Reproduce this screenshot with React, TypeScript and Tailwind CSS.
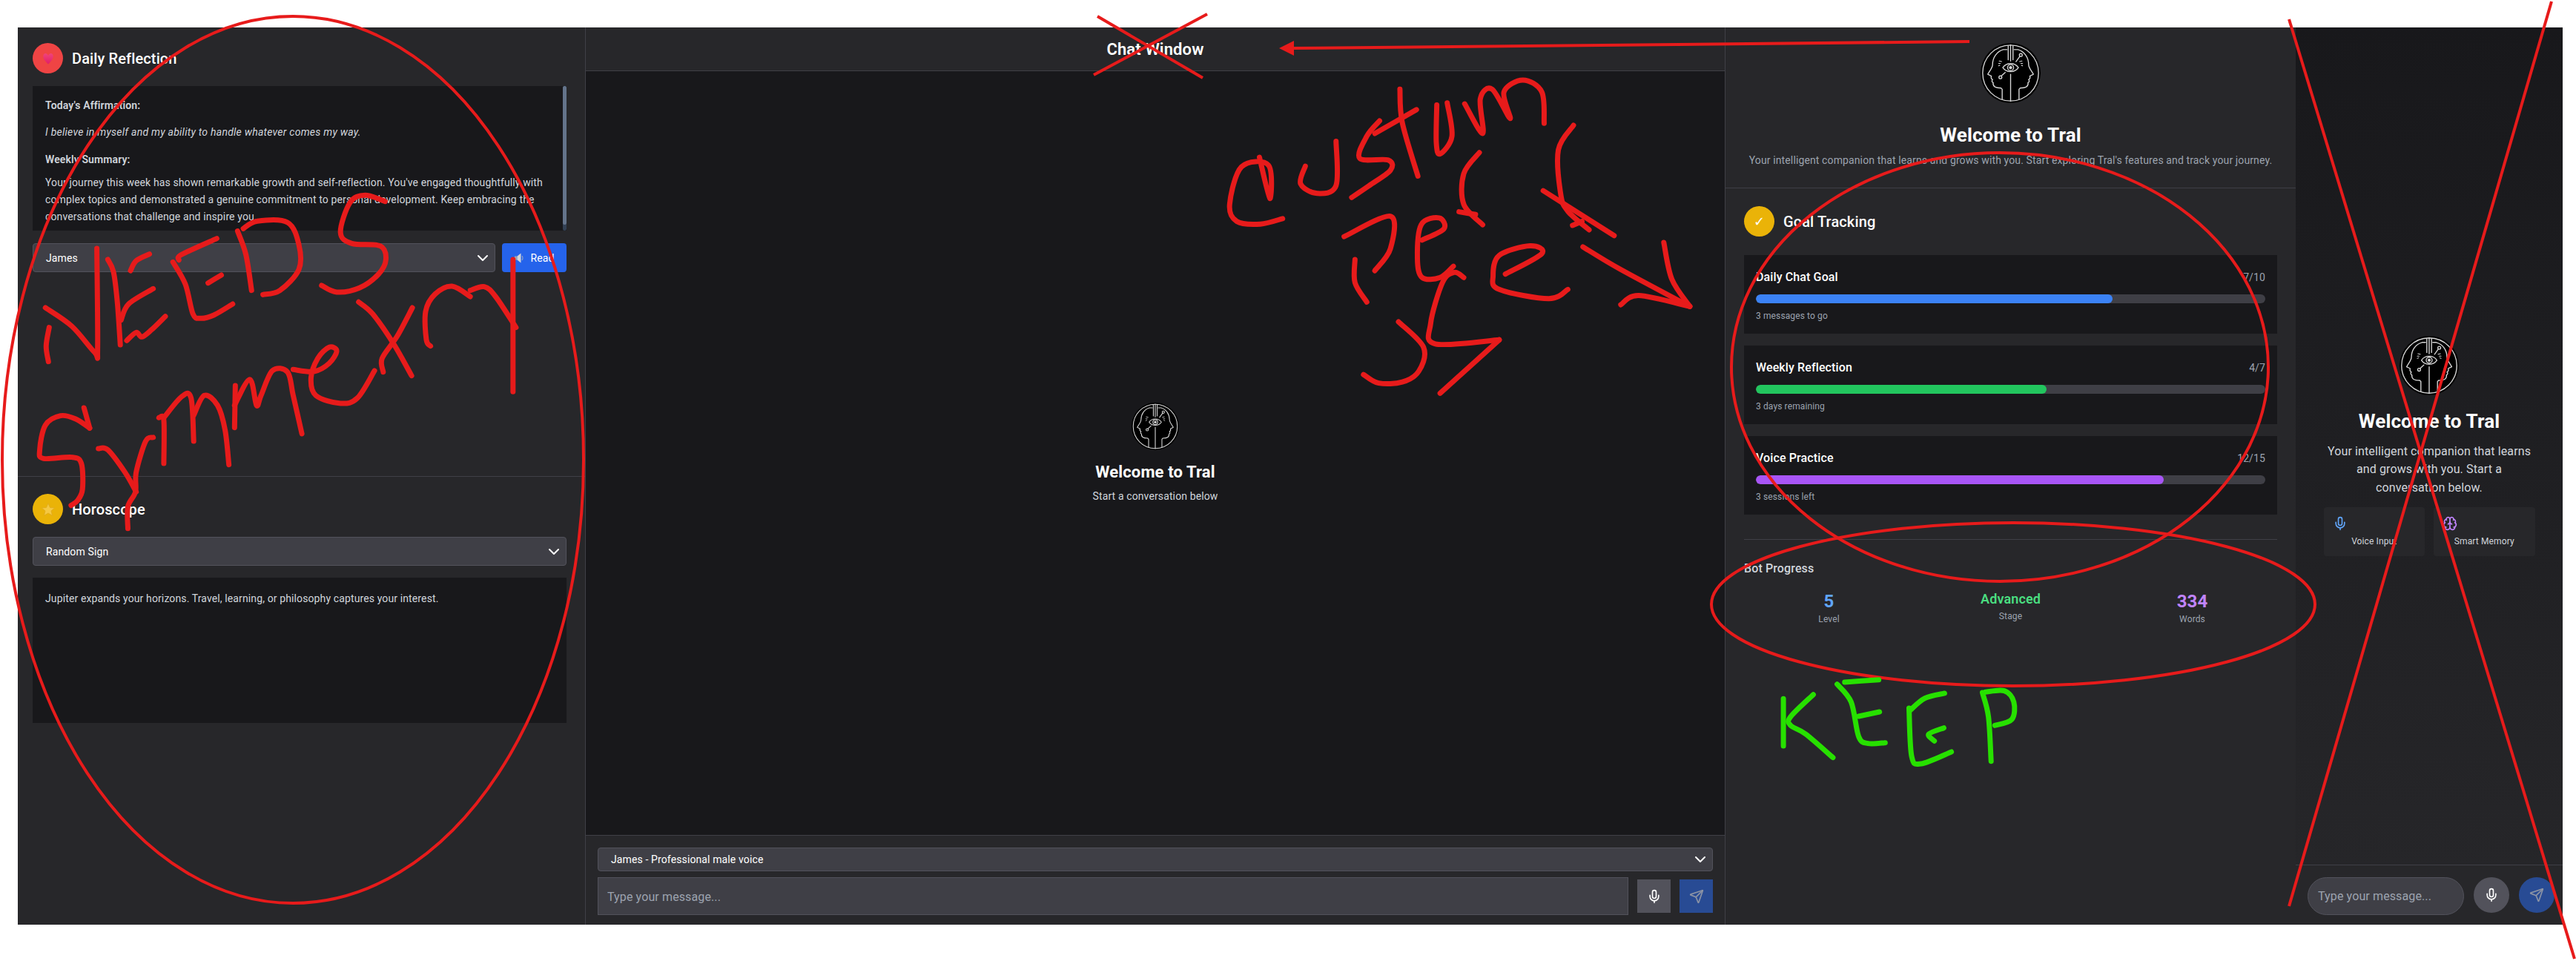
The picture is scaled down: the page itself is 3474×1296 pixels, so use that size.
import React from "react";
import { ChevronDown, Mic, Send, Brain } from "lucide-react";

type P = [number, number];

function smooth(pts: P[]): string {
  let d = `M${pts[0][0]} ${pts[0][1]}`;
  for (let i = 0; i < pts.length - 1; i++) {
    const p0 = pts[Math.max(0, i - 1)];
    const p1 = pts[i];
    const p2 = pts[i + 1];
    const p3 = pts[Math.min(pts.length - 1, i + 2)];
    const c1x = p1[0] + (p2[0] - p0[0]) / 6;
    const c1y = p1[1] + (p2[1] - p0[1]) / 6;
    const c2x = p2[0] - (p3[0] - p1[0]) / 6;
    const c2y = p2[1] - (p3[1] - p1[1]) / 6;
    d += ` C${c1x} ${c1y} ${c2x} ${c2y} ${p2[0]} ${p2[1]}`;
  }
  return d;
}

const symmetryInk: P[][] = [
  [[128, 503], [122, 440], [130, 365]],
  [[120, 285], [190, 360], [250, 465], [258, 450], [256, 45]],
  [[285, 90], [300, 140], [310, 260], [318, 435]],
  [[395, 68], [360, 95], [345, 135]],
  [[405, 208], [340, 270], [320, 335]],
  [[437, 320], [400, 375], [375, 403], [360, 385], [335, 418]],
  [[573, 5], [480, 70], [473, 92]],
  [[457, 100], [490, 190], [510, 310], [530, 328], [565, 315], [615, 270]],
  [[585, 153], [550, 185]],
  [[628, -25], [650, 70], [665, 215]],
  [[643, -35], [680, -65], [760, -60], [790, 30], [790, 130], [740, 215], [695, 232]],
  [[1018, -145], [965, -170], [925, -140], [900, -20], [930, 25], [1005, 35], [1020, 90], [1000, 150], [950, 205], [890, 222], [850, 195]],
  [[222, 690], [237, 772]],
  [[237, 772], [200, 735], [160, 722], [120, 760], [105, 860], [115, 895], [190, 890], [215, 915], [218, 1020], [205, 1065], [188, 1085]],
  [[260, 855], [285, 860], [330, 950], [360, 1030]],
  [[405, 810], [385, 825], [360, 950], [358, 1030], [338, 1090], [338, 1178]],
  [[420, 730], [433, 740], [433, 915]],
  [[433, 730], [480, 645], [505, 650], [512, 825]],
  [[512, 720], [540, 640], [575, 680], [595, 780], [605, 920]],
  [[622, 600], [620, 770]],
  [[620, 680], [660, 575], [678, 680], [690, 640], [720, 540], [760, 545], [775, 640], [798, 795]],
  [[775, 535], [830, 543], [870, 510], [890, 460], [870, 445], [840, 490], [822, 570], [835, 640], [900, 672], [945, 650], [990, 540]],
  [[948, 262], [985, 310], [1040, 430], [1088, 560]],
  [[1090, 285], [1050, 400], [1010, 490], [1013, 545]],
  [[1138, 440], [1127, 415], [1125, 300], [1150, 230], [1195, 198], [1243, 240]],
  [[1243, 215], [1280, 200], [1310, 240], [1364, 365]],
  [[1356, 90], [1356, 625]],
];

const customInk: P[][] = [
  [[468, 462], [490, 583], [487, 485], [430, 490], [405, 600], [420, 650], [470, 658], [517, 642]],
  [[565, 488], [555, 540], [590, 568], [630, 545], [630, 415]],
  [[722, 355], [695, 400], [680, 465], [740, 470], [745, 500], [700, 545], [663, 580]],
  [[765, 262], [770, 360], [803, 517]],
  [[712, 392], [800, 322]],
  [[843, 308], [842, 420], [850, 452], [875, 400], [865, 302]],
  [[902, 305], [940, 392], [935, 290], [960, 262], [998, 348], [985, 270], [1025, 235], [1065, 270], [1070, 362]],
  [[933, 448], [900, 510], [900, 600], [940, 660]],
  [[890, 622], [925, 630]],
  [[1132, 368], [1100, 440], [1105, 570], [1120, 620], [1165, 675]],
  [[1130, 662], [1150, 650]],
  [[1068, 560], [1218, 692]],
  [[1152, 725], [1230, 790], [1378, 900]],
  [[1323, 712], [1340, 820], [1378, 900]],
  [[1232, 895], [1270, 868], [1378, 900]],
  [[647, 695], [745, 635], [745, 730], [712, 795]],
  [[670, 762], [670, 830], [695, 887]],
  [[812, 705], [858, 672], [848, 640], [810, 660], [802, 760], [812, 815], [850, 815], [878, 782]],
  [[900, 815], [880, 800], [855, 830], [830, 950], [840, 1010], [975, 998]],
  [[975, 998], [850, 1155]],
  [[988, 805], [1065, 745], [1040, 722], [975, 750], [962, 810], [975, 850], [1080, 877], [1120, 850]],
  [[762, 945], [815, 1020], [805, 1090], [770, 1122], [720, 1125], [688, 1100]],
];

const keepInk: P[][] = [
  [[206, 727], [206, 918]],
  [[285, 710], [225, 800], [225, 835], [265, 870], [337, 965]],
  [[368, 660], [458, 650]],
  [[348, 668], [385, 740], [405, 880], [430, 908], [475, 905]],
  [[405, 798], [460, 780]],
  [[632, 705], [580, 725], [540, 775]],
  [[538, 765], [545, 960], [570, 990], [650, 942]],
  [[630, 845], [590, 870], [605, 898]],
  [[732, 702], [748, 800], [755, 980]],
  [[740, 700], [790, 695], [815, 740], [810, 810], [765, 835]],
];

function Ink({ strokes, transform, color, width }: { strokes: P[][]; transform: string; color: string; width: number }) {
  return (
    <g transform={transform}>
      {strokes.map((s, i) => (
        <path key={i} d={smooth(s)} fill="none" stroke={color} strokeWidth={width} strokeLinecap="round" strokeLinejoin="round" vectorEffect="non-scaling-stroke" />
      ))}
    </g>
  );
}

function Annotations() {
  const red = "#e71b1b";
  return (
    <svg className="absolute left-0 top-0 pointer-events-none" width={3474} height={1296} viewBox="0 0 3474 1296">
      <g fill="none" stroke={red} strokeWidth={4}>
        <ellipse cx={395} cy={620} rx={392} ry={598} />
        <ellipse cx={2697} cy={495} rx={362} ry={289} />
        <ellipse cx={2715} cy={815} rx={407} ry={110} />
      </g>
      <g stroke={red} strokeWidth={4}>
        <line x1={1480} y1={22} x2={1622} y2={105} />
        <line x1={1628} y1={19} x2={1475} y2={101} />
        <line x1={3087} y1={26} x2={3472} y2={1293} />
        <line x1={3441} y1={2} x2={3087} y2={1222} />
        <line x1={2656} y1={56} x2={1744} y2={65} />
      </g>
      <polygon points="1725,65 1745,55 1745,75" fill={red} />
      <Ink strokes={symmetryInk} transform="translate(0 320) scale(0.5102 0.3333)" color={red} width={7} />
      <Ink strokes={customInk} transform="translate(1400 0) scale(0.6378 0.4592)" color={red} width={7} />
      <Ink strokes={keepInk} transform="translate(2300 700) scale(0.5102 0.3333)" color="#27e000" width={7} />
    </svg>
  );
}

function TralLogo({ size }: { size: number }) {
  const half = (
    <>
      <path d="M44 11 H38 C27 14 20 24 20 36 C20 41 16 45 12 52 L18 55 C17 58 18 60 20 61 C18 63 19 65 21 66 C20 72 24 75 34 75 L36 77 V94" />
      <path d="M46 5 V28" />
      <path d="M31 30 l4 1 M30 34 l3 0 M32 37 l-2 1" strokeWidth={1.3} />
    </>
  );
  return (
    <svg width={size} height={size} viewBox="0 0 100 100" fill="none" stroke="#d6d6d6" strokeWidth={1.7} strokeLinecap="round" strokeLinejoin="round" className="block shrink-0">
      <circle cx={50} cy={50} r={50} fill="#000" stroke="none" />
      <circle cx={50} cy={50} r={46.5} />
      <path d="M50 3 V30 M50 52 V97" />
      {half}
      <g transform="translate(100 0) scale(-1 1)">{half}</g>
      <path d="M37 41 C43 32 57 32 63 41 C57 50 43 50 37 41 Z" />
      <circle cx={50} cy={41} r={5} />
      <circle cx={50} cy={41} r={2.6} fill="#d6d6d6" stroke="none" />
      <circle cx={67} cy={20} r={2.4} />
      <path d="M65.5 22 L59 31" />
      <circle cx={33} cy={57} r={2.4} />
      <path d="M34.5 55 L41 49" />
    </svg>
  );
}

function HeartBadge() {
  return (
    <div className="w-[41px] h-[41px] rounded-full bg-[#ef4444] flex items-center justify-center shrink-0">
      <svg width={18} height={18} viewBox="0 0 24 24">
        <defs>
          <linearGradient id="heartFill" x1="0" y1="0" x2="0" y2="1">
            <stop offset="0" stopColor="#f0447a" />
            <stop offset="1" stopColor="#e11d68" />
          </linearGradient>
        </defs>
        <path d="M12 22 C5 15 3 11 3 8 C3 4 6 2 8.500 3 C10 3.500 11.500 5 12 7 C12.500 5 14 3.500 15.500 3 C18 2 21 4 21 8 C21 11 19 15 12 22 Z" fill="url(#heartFill)" />
      </svg>
    </div>
  );
}

function StarBadge() {
  return (
    <div className="w-[41px] h-[41px] rounded-full bg-[#eab308] flex items-center justify-center shrink-0">
      <svg width={20} height={20} viewBox="0 0 24 24">
        <path d="M12 2 L15 9 L22.500 9.500 L16.800 14.400 L18.700 22 L12 18 L5.300 22 L7.200 14.400 L1.500 9.500 L9 9 Z" fill="#f5c842" stroke="#e0a91a" strokeWidth={1} strokeLinejoin="round" />
      </svg>
    </div>
  );
}

function SpeakerGlyph() {
  return (
    <svg width={16} height={16} viewBox="0 0 16 16" className="shrink-0">
      <rect x={1} y={5.500} width={3.500} height={5} fill="#9ca3af" />
      <path d="M4.500 5.500 L9.500 1.500 V14.500 L4.500 10.500 Z" fill="#d1d5db" />
      <path d="M11 5 Q13 8 11 11" fill="none" stroke="#93a4c4" strokeWidth={1.100} />
    </svg>
  );
}

function Dropdown({ label, className }: { label: string; className: string }) {
  return (
    <div className={`flex items-center justify-between bg-[#3f3f46] border border-[#52525b] rounded pl-[17px] pr-[4px] text-sm text-white ${className}`}>
      <span>{label}</span>
      <ChevronDown size={24} strokeWidth={2} className="text-white" />
    </div>
  );
}

function GoalCard({ label, value, note, pct, bar }: { label: string; value: string; note: string; pct: number; bar: string }) {
  return (
    <div className="bg-[#18181b] h-[106px] px-4 pt-5">
      <div className="flex justify-between items-center h-5 mb-[13px]">
        <span className="text-base font-medium text-white">{label}</span>
        <span className="text-sm text-[#9ca3af]">{value}</span>
      </div>
      <div className="h-3 rounded-full bg-[#3f3f46] overflow-hidden">
        <div className={`h-full rounded-full ${bar}`} style={{ width: `${pct}%` }} />
      </div>
      <div className="mt-[9px] text-xs leading-4 text-[#9ca3af]">{note}</div>
    </div>
  );
}

function Stat({ value, label, valueClass, gap }: { value: string; label: string; valueClass: string; gap: string }) {
  return (
    <div className="flex flex-col items-center">
      <div className={valueClass}>{value}</div>
      <div className={`text-xs leading-4 text-[#9ca3af] ${gap}`}>{label}</div>
    </div>
  );
}

export default function App() {
  return (
    <div className="relative w-[3474px] h-[1296px] bg-white overflow-hidden pl-6 pt-[37px] tracking-[0.12px] [font-family:Roboto,sans-serif]">
      <div className="flex w-[3432px] h-[1210px] text-white">
        {/* Left column */}
        <aside className="w-[765px] shrink-0 bg-[#27272a] flex flex-col">
          <section className="h-[606px] shrink-0 border-b border-[#3f3f46] pl-5 pr-[25px] pt-[21px]">
            <div className="flex items-center gap-3 mb-[17px]">
              <HeartBadge />
              <h2 className="text-xl font-medium">Daily Reflection</h2>
            </div>
            <div className="h-[195px] bg-[#18181b] flex">
              <div className="flex-1 pl-[17px] pr-3 pt-[15px] text-sm text-[#d1d5db] leading-[23px]">
                <p className="font-semibold mb-[13px]">Today's Affirmation:</p>
                <p className="italic mb-[14px] tracking-[0.25px]">I believe in myself and my ability to handle whatever comes my way.</p>
                <p className="font-semibold mb-2">Weekly Summary:</p>
                <p>Your journey this week has shown remarkable growth and self-reflection. You've engaged thoughtfully with complex topics and demonstrated a genuine commitment to personal development. Keep embracing the conversations that challenge and inspire you.</p>
              </div>
              <div className="w-[5px] h-full rounded-full bg-[#334155]">
                <div className="h-[187px] rounded-full bg-[#64748b]" />
              </div>
            </div>
            <div className="flex gap-[9px] mt-[17px]">
              <Dropdown label="James" className="flex-1 h-[39px]" />
              <button className="w-[87px] h-[39px] rounded bg-[#2563eb] flex items-center justify-center gap-[6px] text-sm text-white">
                <SpeakerGlyph />
                Read
              </button>
            </div>
          </section>
          <section className="flex-1 pl-5 pr-[25px] pt-[23px]">
            <div className="flex items-center gap-3 mb-[17px]">
              <StarBadge />
              <h2 className="text-xl font-medium">Horoscope</h2>
            </div>
            <Dropdown label="Random Sign" className="h-[39px]" />
            <div className="h-[196px] mt-4 bg-[#18181b] px-[17px] pt-4 text-sm leading-6 text-[#d1d5db]">
              Jupiter expands your horizons. Travel, learning, or philosophy captures your interest.
            </div>
          </section>
        </aside>

        {/* Chat column */}
        <main className="w-[1538px] shrink-0 bg-[#18181b] border-x border-[#3f3f46] flex flex-col">
          <header className="h-[59px] shrink-0 bg-[#27272a] border-b border-[#3f3f46] flex items-center justify-center">
            <h1 className="text-[22px] font-semibold">Chat Window</h1>
          </header>
          <div className="flex-1 flex flex-col items-center justify-center">
            <TralLogo size={64} />
            <h3 className="mt-4 text-[22px] font-bold leading-7">Welcome to Tral</h3>
            <p className="mt-2 text-sm text-[#d1d5db]">Start a conversation below</p>
          </div>
          <div className="h-[121px] shrink-0 bg-[#27272a] border-t border-[#3f3f46] px-4 pt-4">
            <Dropdown label="James - Professional male voice" className="h-8" />
            <div className="flex items-center gap-3 mt-2">
              <input
                readOnly
                placeholder="Type your message..."
                className="flex-1 h-[51px] bg-[#3f3f46] border border-[#52525b] px-3 pt-[2px] text-base text-white placeholder:text-[#9ca3af] outline-none"
              />
              <button className="w-[45px] h-[45px] bg-[#52525b] flex items-center justify-center">
                <Mic size={20} className="text-white" />
              </button>
              <button className="w-[45px] h-[45px] bg-[#284b94] flex items-center justify-center">
                <Send size={20} className="text-[#8b93a5]" />
              </button>
            </div>
          </div>
        </main>

        {/* Progress column */}
        <section className="w-[769px] shrink-0 bg-[#27272a] flex flex-col">
          <div className="h-[217px] shrink-0 border-b border-[#3f3f46] flex flex-col items-center pt-[21px]">
            <TralLogo size={81} />
            <h2 className="mt-[27px] text-[26px] font-bold leading-8">Welcome to Tral</h2>
            <p className="mt-2 text-sm leading-5 text-[#9ca3af]">Your intelligent companion that learns and grows with you. Start exploring Tral's features and track your journey.</p>
          </div>
          <div className="px-[25px] pt-6">
            <div className="flex items-center gap-3 mb-[25px]">
              <div className="w-[41px] h-[41px] rounded-full bg-[#eab308] flex items-center justify-center text-lg text-white shrink-0">✓</div>
              <h2 className="text-xl font-medium">Goal Tracking</h2>
            </div>
            <div className="flex flex-col gap-4">
              <GoalCard label="Daily Chat Goal" value="7/10" note="3 messages to go" pct={70} bar="bg-[#3b82f6]" />
              <GoalCard label="Weekly Reflection" value="4/7" note="3 days remaining" pct={57} bar="bg-[#22c55e]" />
              <GoalCard label="Voice Practice" value="12/15" note="3 sessions left" pct={80} bar="bg-[#a855f7]" />
            </div>
            <div className="mt-[33px] border-t border-[#3f3f46] pt-[29px]">
              <h3 className="text-base font-medium leading-5 text-[#d1d5db] mb-5">Bot Progress</h3>
              <div className="grid grid-cols-3 gap-4">
                <Stat value="5" label="Level" valueClass="text-2xl font-bold leading-7 text-[#60a5fa]" gap="mt-[2px]" />
                <Stat value="Advanced" label="Stage" valueClass="text-lg font-semibold leading-[22px] text-[#4ade80]" gap="mt-1" />
                <Stat value="334" label="Words" valueClass="text-2xl font-bold leading-7 text-[#c084fc]" gap="mt-[2px]" />
              </div>
            </div>
          </div>
        </section>

        {/* Preview column */}
        <section className="w-[360px] shrink-0 bg-gradient-to-b from-[#18181b] to-[#27272a] flex flex-col">
          <div className="flex-1 flex flex-col items-center justify-center">
            <TralLogo size={80} />
            <h2 className="mt-[19px] text-[26px] font-bold leading-8">Welcome to Tral</h2>
            <p className="mt-[13px] w-[280px] text-center text-base leading-[24.500px] text-[#d1d5db]">Your intelligent companion that learns and grows with you. Start a conversation below.</p>
            <div className="mt-[14px] grid grid-cols-2 gap-3 w-[285px]">
              <div className="bg-[#27272a] rounded p-3">
                <Mic size={20} className="text-[#60a5fa]" />
                <div className="mt-[6px] text-xs leading-4 text-center text-[#d1d5db]">Voice Input</div>
              </div>
              <div className="bg-[#27272a] rounded p-3">
                <Brain size={20} className="text-[#c084fc]" />
                <div className="mt-[6px] text-xs leading-4 text-center text-[#d1d5db]">Smart Memory</div>
              </div>
            </div>
          </div>
          <div className="h-[81px] shrink-0 bg-[#27272a] border-t border-[#3f3f46] pl-4 pr-[11px] pt-4 flex items-start gap-[13px]">
            <input
              readOnly
              placeholder="Type your message..."
              className="w-[211px] h-[51px] rounded-full bg-[#3f3f46] border border-[#52525b] px-[13px] text-base text-white placeholder:text-[#9ca3af] outline-none"
            />
            <button className="w-12 h-12 rounded-full bg-[#52525b] flex items-center justify-center">
              <Mic size={20} className="text-white" />
            </button>
            <button className="w-12 h-12 rounded-full bg-[#284b94] flex items-center justify-center">
              <Send size={20} className="text-[#8b93a5]" />
            </button>
          </div>
        </section>
      </div>
      <Annotations />
    </div>
  );
}
